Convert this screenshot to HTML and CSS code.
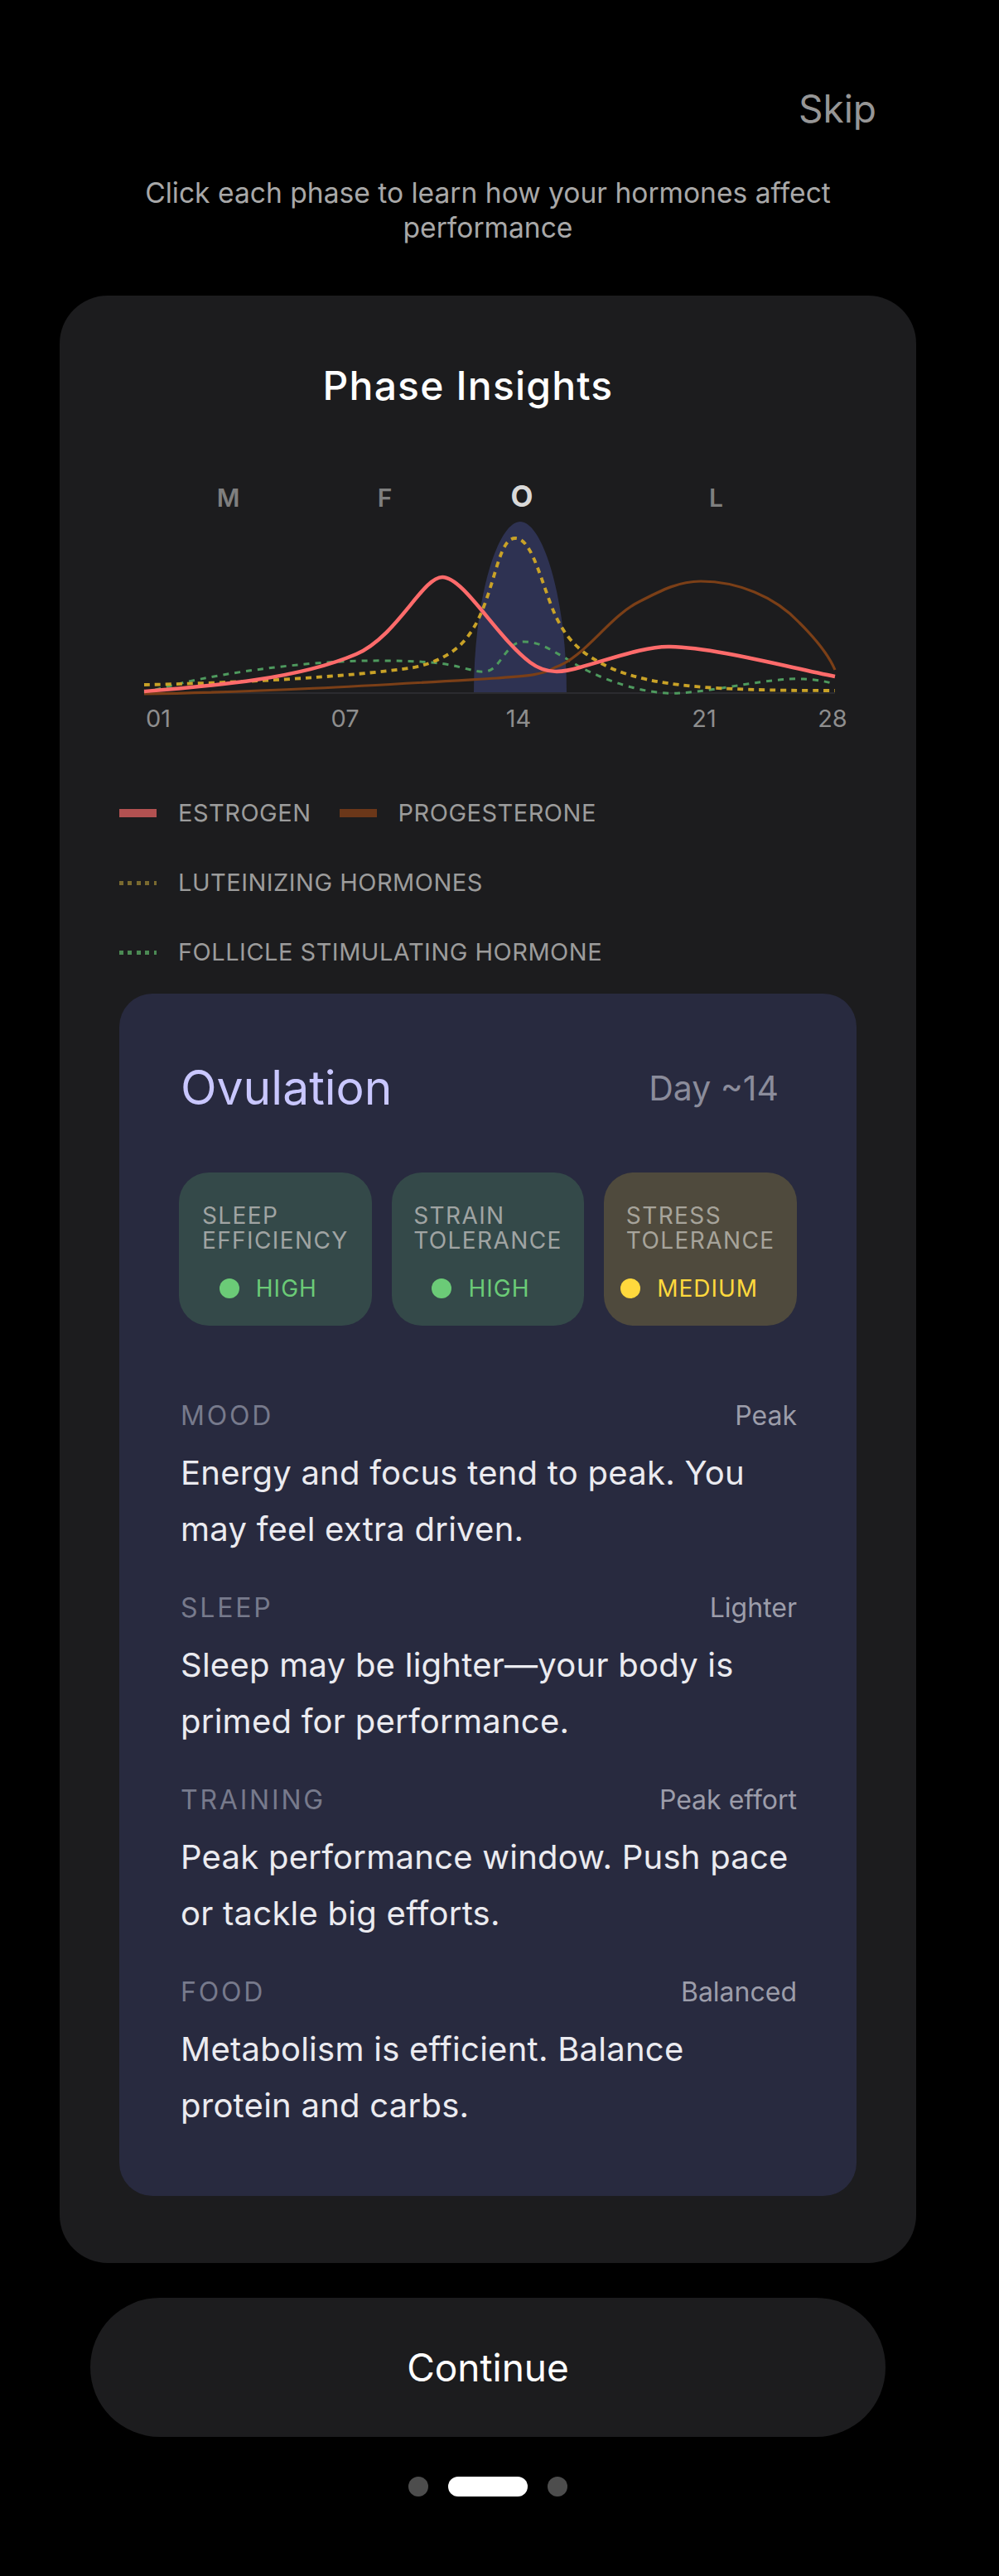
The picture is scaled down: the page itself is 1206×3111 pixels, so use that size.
FILE: index.html
```html
<!DOCTYPE html>
<html lang="en">
<head>
<meta charset="utf-8">
<title>Phase Insights</title>
<link rel="stylesheet" href="styles.css">
</head>
<body>
<div class="screen">
  <header class="topbar"><span class="skip">Skip</span></header>
  <p class="subtitle">Click each phase to learn how your hormones affect performance</p>

  <section class="panel">
    <h1 class="panel-title">Phase Insights</h1>

    <svg class="chart" width="890" height="350" viewBox="144 541 890 350" xmlns="http://www.w3.org/2000/svg">
      <text class="phase-letter" x="275.5" y="612" text-anchor="middle">M</text>
      <text class="phase-letter" x="464.5" y="612" text-anchor="middle">F</text>
      <text class="phase-letter active" x="630" y="612" text-anchor="middle">O</text>
      <text class="phase-letter" x="864.5" y="612" text-anchor="middle">L</text>

      <path class="band" d="M572,837 C572,722 601,630 628,630 C655,630 684,722 684,837 Z"/>
      <line class="baseline" x1="174" y1="837" x2="1008" y2="837"/>

      <path class="curve fsh" d="M174,837 C230,820 300,808 380,801 C430,797 480,797 520,800 C560,803 575,815 590,810 C605,805 612,775 632,775 C652,775 665,785 683,795 C720,820 780,840 820,837 C870,834 930,818 970,820 C990,821 1000,824 1008,826"/>
      <path class="curve lh" d="M174,827 C280,825 420,818 500,806 C550,795 570,770 585,730 C600,690 605,650 622,650 C640,650 650,690 665,730 C680,770 700,790 740,808 C790,828 850,834 1008,834"/>
      <path class="curve prog" d="M174,838 C320,836 480,826 600,819 C640,816 655,815 670,806 C705,795 735,745 771,727 C800,712 820,702 846,702 C890,702 935,720 965,752 C985,772 1000,790 1008,809"/>
      <path class="curve estro" d="M174,835 C260,828 360,820 430,790 C480,768 510,697 534,697 C560,697 600,770 640,800 C660,815 680,812 700,806 C740,795 780,780 809,781 C860,782 940,803 1008,817"/>

      <text class="axis-label" x="191" y="878" text-anchor="middle">01</text>
      <text class="axis-label" x="416.5" y="878" text-anchor="middle">07</text>
      <text class="axis-label" x="626" y="878" text-anchor="middle">14</text>
      <text class="axis-label" x="850" y="878" text-anchor="middle">21</text>
      <text class="axis-label" x="1005" y="878" text-anchor="middle">28</text>
    </svg>

    <ul class="legend">
      <li class="legend-item"><span class="swatch swatch-estro"></span>ESTROGEN</li>
      <li class="legend-item"><span class="swatch swatch-prog"></span>PROGESTERONE</li>
      <li class="legend-item"><span class="swatch swatch-lh"></span>LUTEINIZING HORMONES</li>
      <li class="legend-item"><span class="swatch swatch-fsh"></span>FOLLICLE STIMULATING HORMONE</li>
    </ul>

    <div class="phase-card">
      <div class="phase-head">
        <h2 class="phase-name">Ovulation</h2>
        <span class="phase-day">Day ~14</span>
      </div>

      <div class="chips">
        <div class="chip chip-good">
          <div class="chip-title">SLEEP<br>EFFICIENCY</div>
          <div class="chip-status status-high"><span class="status-dot"></span>HIGH</div>
        </div>
        <div class="chip chip-good">
          <div class="chip-title">STRAIN<br>TOLERANCE</div>
          <div class="chip-status status-high"><span class="status-dot"></span>HIGH</div>
        </div>
        <div class="chip chip-mid">
          <div class="chip-title">STRESS<br>TOLERANCE</div>
          <div class="chip-status status-medium"><span class="status-dot"></span>MEDIUM</div>
        </div>
      </div>

      <div class="insights">
        <div class="insight">
          <div class="insight-head"><span class="insight-label">MOOD</span><span class="insight-value">Peak</span></div>
          <p class="insight-text">Energy and focus tend to peak. You may feel extra driven.</p>
        </div>
        <div class="insight">
          <div class="insight-head"><span class="insight-label">SLEEP</span><span class="insight-value">Lighter</span></div>
          <p class="insight-text">Sleep may be lighter—your body is primed for performance.</p>
        </div>
        <div class="insight">
          <div class="insight-head"><span class="insight-label">TRAINING</span><span class="insight-value">Peak effort</span></div>
          <p class="insight-text">Peak performance window. Push pace or tackle big efforts.</p>
        </div>
        <div class="insight">
          <div class="insight-head"><span class="insight-label">FOOD</span><span class="insight-value">Balanced</span></div>
          <p class="insight-text">Metabolism is efficient. Balance protein and carbs.</p>
        </div>
      </div>
    </div>
  </section>

  <button class="continue" type="button">Continue</button>

  <div class="dots">
    <span class="dot"></span>
    <span class="dot dot-active"></span>
    <span class="dot"></span>
  </div>
</div>
</body>
</html>
```

FILE: styles.css
```css
html, body {
  margin: 0;
  padding: 0;
  background: #000;
}

body {
  font-family: Inter, "Noto Sans", "Liberation Sans", sans-serif;
  color: #fff;
}

.screen {
  width: 1178px;
  padding-bottom: 96px;
}

.topbar {
  display: flex;
  justify-content: flex-end;
  padding: 103px 120px 0 0;
}

.skip {
  font-size: 46px;
  line-height: 56px;
  color: #969696;
}

.subtitle {
  margin: 53px 0 0;
  padding: 0 140px;
  font-size: 33.6px;
  line-height: 42px;
  text-align: center;
  color: #a8a8a8;
}

.panel {
  margin: 61px 72px 0;
  padding: 80px 72px 81px;
  background: #1c1c1e;
  border-radius: 58px;
}

.panel-title {
  margin: 0 0 46px;
  padding-right: 48px;
  font-size: 48px;
  line-height: 58px;
  font-weight: 500;
  letter-spacing: 1.2px;
  text-align: center;
  color: #fff;
}

.chart {
  display: block;
}

.phase-letter {
  font-family: Inter, "Noto Sans", sans-serif;
  font-size: 30px;
  font-weight: 600;
  fill: #7f7f7f;
}

.phase-letter.active {
  font-size: 35px;
  font-weight: 700;
  fill: #d9d9d9;
}

.band {
  fill: #2e3252;
}

.baseline {
  stroke: #2b2b2f;
  stroke-width: 2;
}

.curve {
  fill: none;
  stroke-linecap: butt;
}

.estro {
  stroke: #ff6b6b;
  stroke-width: 4.5;
}

.prog {
  stroke: #7b3f17;
  stroke-width: 3.2;
}

.lh {
  stroke: #c9a227;
  stroke-width: 3.8;
  stroke-dasharray: 7 6;
}

.fsh {
  stroke: #4e9a5e;
  stroke-width: 3;
  stroke-dasharray: 7 7;
}

.axis-label {
  font-family: Inter, "Noto Sans", sans-serif;
  font-size: 29px;
  fill: #8e8e8e;
}

.legend {
  list-style: none;
  margin: 73px 0 0;
  padding: 0;
  display: flex;
  flex-wrap: wrap;
  column-gap: 34px;
  row-gap: 48px;
}

.legend-item {
  display: flex;
  align-items: center;
  gap: 26px;
  font-size: 29px;
  line-height: 36px;
  letter-spacing: 0.5px;
  color: #9c9c9c;
}

.swatch {
  display: block;
  width: 45px;
  flex: none;
}

.swatch-estro {
  height: 10px;
  background: #b25151;
}

.swatch-prog {
  height: 10px;
  background: #6b3719;
}

.swatch-lh {
  height: 5px;
  background: repeating-linear-gradient(90deg, #7a6a2f 0 5px, transparent 5px 10.5px);
}

.swatch-fsh {
  height: 5px;
  background: repeating-linear-gradient(90deg, #4b8a54 0 5px, transparent 5px 10.5px);
}

.phase-card {
  margin-top: 32px;
  padding: 80px 72px 75px;
  background: #282a3f;
  border-radius: 40px;
}

.phase-head {
  display: flex;
  justify-content: space-between;
  align-items: center;
  padding-left: 2px;
}

.phase-name {
  margin: 0;
  font-size: 57px;
  line-height: 68px;
  font-weight: 400;
  color: #c9c7ff;
}

.phase-day {
  margin-right: 22px;
  font-size: 41px;
  color: #8b8c9b;
}

.chips {
  margin-top: 68px;
  display: grid;
  grid-template-columns: repeat(3, 1fr);
  gap: 24px;
}

.chip {
  height: 185px;
  box-sizing: border-box;
  padding-top: 37px;
  display: flex;
  flex-direction: column;
  align-items: center;
  border-radius: 36px;
}

.chip-good {
  background: #344949;
}

.chip-mid {
  background: #4f4a3d;
}

.chip-title {
  font-size: 28px;
  line-height: 30px;
  letter-spacing: 1.4px;
  color: #a0a4a3;
}

.chip-mid .chip-title {
  color: #a7a49b;
}

.chip-status {
  margin-top: 28px;
  display: flex;
  align-items: center;
  gap: 20px;
  font-size: 28px;
  line-height: 30px;
  letter-spacing: 1px;
}

.status-dot {
  width: 24px;
  height: 24px;
  border-radius: 50%;
  background: currentColor;
  flex: none;
}

.status-high {
  color: #6bcb77;
  padding-right: 17px;
}

.status-medium {
  color: #ffd93d;
  padding-right: 27px;
}

.insights {
  margin-top: 89px;
  display: flex;
  flex-direction: column;
  gap: 41px;
}

.insight-head {
  display: flex;
  justify-content: space-between;
  padding-left: 2px;
  font-size: 32px;
  line-height: 40px;
}

.insight-label {
  letter-spacing: 2.8px;
  color: #777a8c;
}

.insight-value {
  color: #9c9daa;
}

.insight-text {
  margin: 15px 0 0;
  padding-left: 2px;
  font-size: 40px;
  line-height: 68px;
  letter-spacing: 0.25px;
  color: #ebebf0;
}

.continue {
  display: block;
  width: 960px;
  height: 168px;
  margin: 42px auto 0;
  border: none;
  border-radius: 84px;
  background: #1c1c1e;
  color: #fff;
  font-family: Inter, "Noto Sans", sans-serif;
  font-size: 46px;
}

.dots {
  margin-top: 48px;
  display: flex;
  justify-content: center;
  gap: 24px;
}

.dot {
  width: 24px;
  height: 24px;
  border-radius: 12px;
  background: #4d4d4d;
}

.dot-active {
  width: 96px;
  background: #fff;
}
```
